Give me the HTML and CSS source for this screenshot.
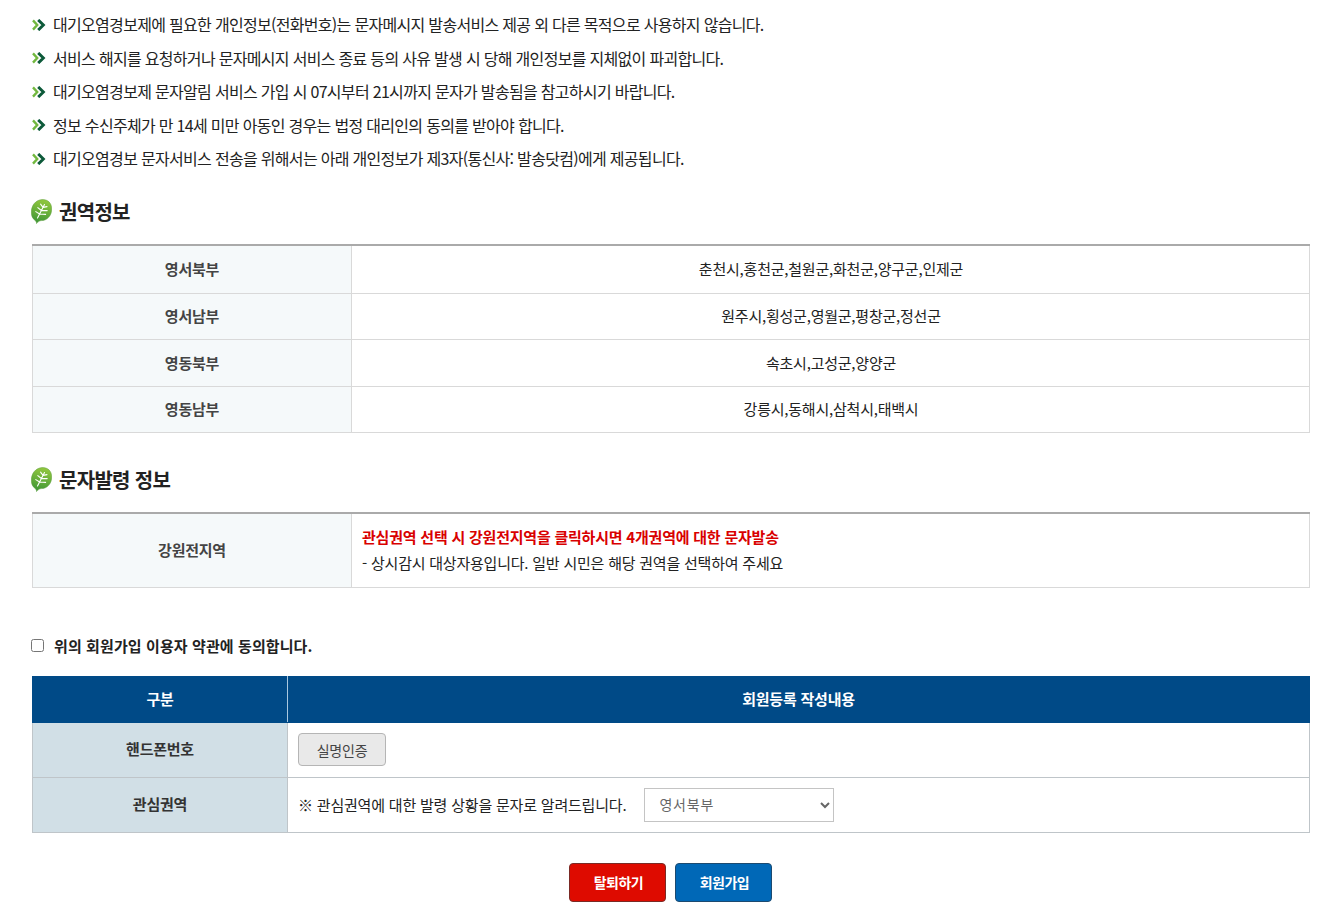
FILE: index.html
```html
<!DOCTYPE html>
<html lang="ko">
<head>
<meta charset="utf-8">
<title>회원가입</title>
<link rel="stylesheet" href="styles.css">
</head>
<body>
<svg class="defs" width="0" height="0" aria-hidden="true">
  <defs>
    <linearGradient id="leafg" x1="0.6" y1="0" x2="0.4" y2="1">
      <stop offset="0" stop-color="#93c83e"/>
      <stop offset="1" stop-color="#3d9636"/>
    </linearGradient>
    <symbol id="chev" viewBox="0 0 14 12">
      <path d="M1 1.4 L5.2 6 L1 10.6" fill="none" stroke="#72b83f" stroke-width="2.4"/>
      <path d="M6.2 0.9 L11.4 6 L6.2 11.1" fill="none" stroke="#0d5a3a" stroke-width="2.9"/>
    </symbol>
    <symbol id="leaf" viewBox="0 0 21 25">
      <path d="M5.5 24.6 C5.6 23 5 22.2 3.8 21.2 C1.4 19.4 0.3 16.6 0.3 13.4 C0.3 6.4 4.6 1 11 0.6 C16.8 0.2 20.7 4 20.7 10 C20.7 16.8 16 21.6 10.4 21.6 C8.4 21.6 7.2 22.8 5.5 24.6 Z" fill="url(#leafg)" stroke="#5d9c3c" stroke-width="0.5"/>
      <path d="M6.5 19 L13.5 5.5 M8.6 15 L4.8 12.6 M8.6 15 L14.6 15.4 M10.4 11.5 L6.8 8.6 M10.4 11.5 L16.2 11.6 M12 8.4 L9.6 5.2 M12 8.4 L16 7.6" fill="none" stroke="#fff" stroke-width="1.1" stroke-linecap="round"/>
    </symbol>
  </defs>
</svg>

<ul class="notice">
  <li><svg class="chev"><use href="#chev"/></svg>대기오염경보제에 필요한 개인정보(전화번호)는 문자메시지 발송서비스 제공 외 다른 목적으로 사용하지 않습니다.</li>
  <li><svg class="chev"><use href="#chev"/></svg>서비스 해지를 요청하거나 문자메시지 서비스 종료 등의 사유 발생 시 당해 개인정보를 지체없이 파괴합니다.</li>
  <li><svg class="chev"><use href="#chev"/></svg>대기오염경보제 문자알림 서비스 가입 시 07시부터 21시까지 문자가 발송됨을 참고하시기 바랍니다.</li>
  <li><svg class="chev"><use href="#chev"/></svg>정보 수신주체가 만 14세 미만 아동인 경우는 법정 대리인의 동의를 받아야 합니다.</li>
  <li><svg class="chev"><use href="#chev"/></svg>대기오염경보 문자서비스 전송을 위해서는 아래 개인정보가 제3자(통신사: 발송닷컴)에게 제공됩니다.</li>
</ul>

<h2 class="title first"><svg class="leaf"><use href="#leaf"/></svg>권역정보</h2>
<table class="info">
  <tr><th>영서북부</th><td>춘천시,홍천군,철원군,화천군,양구군,인제군</td></tr>
  <tr><th>영서남부</th><td>원주시,횡성군,영월군,평창군,정선군</td></tr>
  <tr><th>영동북부</th><td>속초시,고성군,양양군</td></tr>
  <tr><th>영동남부</th><td>강릉시,동해시,삼척시,태백시</td></tr>
</table>

<h2 class="title second"><svg class="leaf"><use href="#leaf"/></svg>문자발령 정보</h2>
<table class="info alert">
  <tr>
    <th>강원전지역</th>
    <td>
      <p class="red">관심권역 선택 시 강원전지역을 클릭하시면 4개권역에 대한 문자발송</p>
      <p>- 상시감시 대상자용입니다. 일반 시민은 해당 권역을 선택하여 주세요</p>
    </td>
  </tr>
</table>

<label class="agree"><input type="checkbox"><span>위의 회원가입 이용자 약관에 동의합니다.</span></label>

<table class="form">
  <tr class="head"><th class="c1">구분</th><th>회원등록 작성내용</th></tr>
  <tr class="r1"><th>핸드폰번호</th><td><button type="button" class="verify">실명인증</button></td></tr>
  <tr class="r2"><th>관심권역</th><td><div class="zone"><span>※ 관심권역에 대한 발령 상황을 문자로 알려드립니다.</span>
    <select class="sel"><option>영서북부</option><option>영서남부</option><option>영동북부</option><option>영동남부</option><option>강원전지역</option></select></div></td></tr>
</table>

<div class="actions">
  <button type="button" class="btn out">탈퇴하기</button>
  <button type="button" class="btn join">회원가입</button>
</div>
</body>
</html>
```
FILE: styles.css
```css
* { box-sizing: border-box; }
html, body { margin: 0; padding: 0; background: #fff; }
body {
  padding: 8px 29px 0 32px;
  font-family: "Noto Sans CJK KR", "Noto Sans", sans-serif;
  font-size: 15px;
  color: #222;
  letter-spacing: -0.22px;
}
.defs { position: absolute; }
.notice { list-style: none; margin: 0; padding: 0; }
.notice li {
  display: flex;
  align-items: center;
  height: 33.5px;
  font-size: 16px;
  letter-spacing: -0.69px;
  line-height: 33.5px;
}
.chev { width: 14px; height: 12px; margin-right: 7px; flex: none; }
.title {
  display: flex;
  align-items: center;
  margin: 0;
  font-size: 20px;
  font-weight: 700;
  color: #222;
  letter-spacing: -0.7px;
  height: 30px;
}
.title.first { margin-top: 20.5px; margin-bottom: 18px; }
.title.second { margin-top: 31px; margin-bottom: 18px; }
.leaf { width: 21px; height: 25px; margin: 1px 7px 0 -1px; flex: none; }
table { width: 1278px; border-collapse: collapse; table-layout: fixed; }
.info { border-top: 2px solid #aaa; }
.info th, .info td {
  border: 1px solid #d9d9d9;
  height: 46.5px;
  padding: 0 0 1px;
  font-size: 15px;
  font-weight: 400;
  text-align: center;
}
.info td { padding-left: 1px; }
.info tr:first-child th, .info tr:first-child td { border-top: 0; height: 48px; }
.info th { width: 319px; background: #f5f9fa; font-weight: 700; color: #444; }
.info.alert tr:first-child td { text-align: left; padding: 0 10px; }
.info.alert tr:first-child th, .info.alert tr:first-child td { height: 74px; }
.alert p { margin: 0; line-height: 26px; }
.red { color: #d90000; font-weight: 700; }
.agree {
  display: flex;
  align-items: center;
  margin-top: 43px;
  height: 30px;
  font-size: 15px;
  font-weight: 700;
  letter-spacing: 0.1px;
  color: #222;
}
.agree input { width: 13px; height: 13px; margin: 0 10px 0 -1px; }
.form { margin-top: 15px; }
.form th, .form td { border: 1px solid #bfc5c9; padding: 0 0 2px; font-size: 15px; }
.form th { background: #d1dfe6; color: #333; font-weight: 700; text-align: center; }
.form .c1 { width: 255px; }
.form .head th { background: #004a87; color: #fff; height: 46px; border-color: #004a87; border-right-color: #a9c8e0; }
.form .head th:last-child { border-right-color: #004a87; }
.form .r1 th, .form .r1 td, .form .r2 th, .form .r2 td { height: 55px; }
.form td { padding: 0 10px; }
.zone span { letter-spacing: -0.2px; }
.verify {
  width: 88px;
  height: 33px;
  background: #e9e9e9;
  border: 1px solid #b5b5b5;
  border-radius: 4px;
  color: #444;
  font-family: inherit;
  font-size: 14px;
  letter-spacing: -0.2px;
}
.zone { display: flex; align-items: center; gap: 18px; }
.sel {
  width: 190px;
  height: 34px;
  padding-left: 10px;
  padding-bottom: 2px;
  background: #fff;
  border: 1px solid #c4c4c4;
  color: #666;
  font-family: inherit;
  font-size: 14px;
  letter-spacing: 0.8px;
}
.actions { display: flex; justify-content: center; gap: 9px; margin-top: 30px; padding-right: 1px; }
.btn {
  width: 97px;
  height: 39px;
  padding: 0 0 0 2px;
  border-radius: 4px;
  border: 1px solid #333;
  color: #fff;
  font-family: inherit;
  font-size: 14px;
  font-weight: 700;
  letter-spacing: -0.5px;
}
.out { background: #de0b00; border-color: #7a2a25; }
.join { background: #0068b7; border-color: #1c4a70; }
```
